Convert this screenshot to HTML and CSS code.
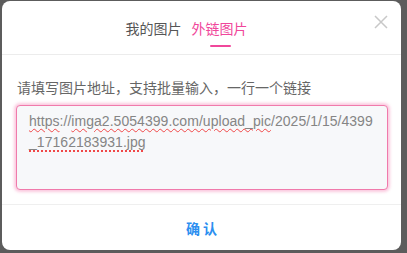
FILE: index.html
```html
<!DOCTYPE html>
<html lang="zh">
<head>
<meta charset="utf-8">
<link rel="stylesheet" href="styles.css">
</head>
<body>
<div class="dialog">
  <div class="header">
    <div class="tabs">
      <span class="tab">我的图片</span>
      <span class="tab active">外链图片</span>
    </div>
    <svg class="close" width="14" height="14" viewBox="0 0 14 14"><path d="M1 1L13 13M13 1L1 13" stroke="#c8c8c8" stroke-width="1.5" fill="none"/></svg>
  </div>
  <div class="body">
    <div class="label">请填写图片地址，支持批量输入，一行一个链接</div>
    <div class="input"><span class="err">https</span>://<span class="err">imga2.5054399.com/upload_pic</span>/2025/1/15/4399<br><span class="err2">_17162183931.jpg</span></div>
  </div>
  <div class="footer"><span class="confirm">确 认</span></div>
</div>
</body>
</html>
```
FILE: styles.css
```css
html, body { margin: 0; padding: 0; }
body {
  background: #5c5c5c;
  width: 407px;
  height: 253px;
  overflow: hidden;
  font-family: "Noto Sans CJK SC", "Liberation Sans", sans-serif;
}
.dialog {
  margin: 1px 0 0 2px;
  width: 399px;
  height: 249px;
  background: #fff;
  border-radius: 8px;
  display: flex;
  flex-direction: column;
  position: relative;
}
.header {
  height: 53px;
  border-bottom: 1px solid #ececec;
  display: flex;
  justify-content: center;
  align-items: center;
  padding-right: 30px;
}
.tabs {
  display: flex;
  gap: 10px;
}
.tab {
  font-size: 14px;
  line-height: 20px;
  color: #555;
  position: relative;
}
.tab.active { color: #f0479b; }
.tab.active::after {
  content: "";
  position: absolute;
  left: 50%;
  margin-left: -10px;
  width: 21px;
  height: 2px;
  bottom: -9px;
  background: #f0479b;
  border-radius: 1px;
}
.close {
  position: absolute;
  right: 13px;
  top: 14px;
}
.body {
  padding: 22px 13px 14px 14px;
  display: flex;
  flex-direction: column;
  gap: 8px;
}
.label {
  font-size: 14px;
  line-height: 20px;
  color: #666;
  padding-left: 1px;
}
.input {
  height: 73px;
  border: 1px solid #f07aab;
  border-radius: 4px;
  box-shadow: 0 0 3px 2px rgba(245, 120, 175, 0.4);
  background: #f7f8fa;
  padding: 5px 12px;
  font-family: "Liberation Sans", Arial, sans-serif;
  font-size: 14px;
  line-height: 21px;
  letter-spacing: 0.04px;
  color: #858585;
}
.err {
  text-decoration: underline wavy #f04848;
  text-decoration-thickness: 1px;
  text-underline-offset: 2px;
}
.err2 {
  text-decoration: underline dotted #f04848;
  text-decoration-thickness: 1.5px;
  text-underline-offset: 3px;
}
.footer {
  flex: 1;
  border-top: 1px solid #efefef;
  display: flex;
  align-items: center;
  justify-content: center;
}
.confirm {
  font-size: 14px;
  font-weight: bold;
  color: #2d8ff0;
  line-height: 20px;
}
```
